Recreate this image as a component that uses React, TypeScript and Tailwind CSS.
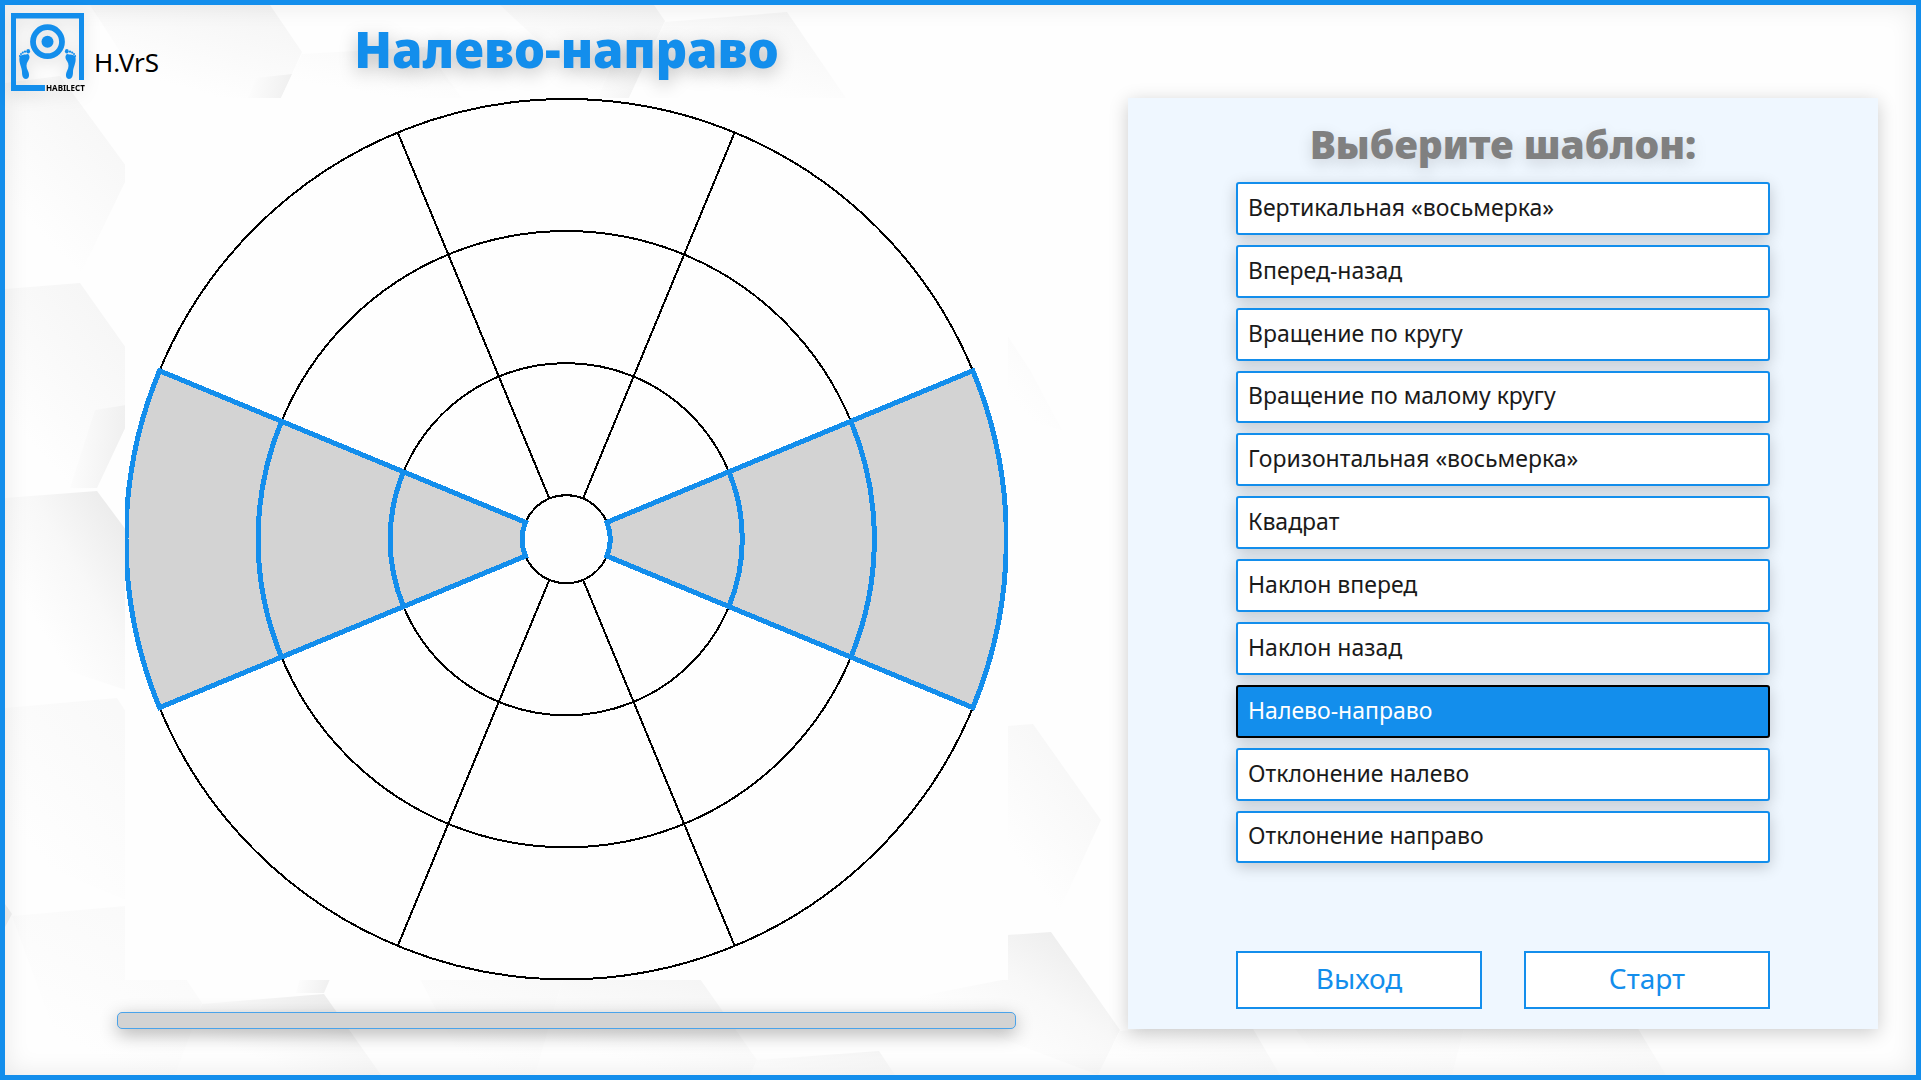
import { useState } from "react";

const templates = [
  "Вертикальная «восьмерка»",
  "Вперед-назад",
  "Вращение по кругу",
  "Вращение по малому кругу",
  "Горизонтальная «восьмерка»",
  "Квадрат",
  "Наклон вперед",
  "Наклон назад",
  "Налево-направо",
  "Отклонение налево",
  "Отклонение направо",
];

function Backdrop() {
  return (
    <svg
      className="absolute inset-0 h-full w-full"
      viewBox="5 5 1911 1070"
      preserveAspectRatio="none"
      aria-hidden="true"
    >
      <defs>
        <linearGradient id="soft" x1="0.8" y1="0" x2="0.3" y2="0.8">
          <stop offset="0" stopColor="#f5f5f5" />
          <stop offset="1" stopColor="#fefefe" />
        </linearGradient>
        <linearGradient id="mid" x1="0.9" y1="0.1" x2="0.3" y2="0.7">
          <stop offset="0" stopColor="#ececec" />
          <stop offset="0.5" stopColor="#f8f8f8" />
          <stop offset="1" stopColor="#fefefe" />
        </linearGradient>
        <linearGradient id="faint" x1="0.8" y1="0" x2="0.3" y2="0.8">
          <stop offset="0" stopColor="#f9f9f9" />
          <stop offset="1" stopColor="#fefefe" />
        </linearGradient>
        <linearGradient id="fold" x1="1" y1="0.5" x2="0" y2="0.4">
          <stop offset="0" stopColor="#efefef" />
          <stop offset="1" stopColor="#fdfdfd" />
        </linearGradient>
      </defs>
      <polygon points="90,5 270,5 302,52 281,98 150,98" fill="url(#soft)" />
      <polygon points="256,78 292,74 281,98 248,98" fill="url(#fold)" />
      <polygon points="302,54 425,47 462,98 281,98" fill="url(#faint)" />
      <polygon points="500,5 654,5 665,21 629,98 600,98" fill="url(#soft)" />
      <polygon points="620,45 655,40 629,98 598,98" fill="url(#fold)" />
      <polygon points="665,22 787,12 846,98 629,98" fill="url(#soft)" />
      <polygon points="5,83 60,76 126,166 126,180 80,275 5,275" fill="url(#soft)" />
      <polygon points="5,289 80,283 126,348 126,426 97,488 5,498" fill="url(#soft)" />
      <polygon points="95,410 126,405 126,426 97,488 70,488" fill="url(#fold)" />
      <polygon points="5,498 97,491 126,530 126,690 5,650" fill="url(#mid)" />
      <polygon points="5,708 117,698 126,712 126,900 5,850" fill="url(#faint)" />
      <polygon points="5,904 12,914 5,927" fill="#f1f1f1" />
      <polygon points="12,916 126,906 186,979 202,1003 175,1075 70,1075" fill="url(#faint)" />
      <polygon points="300,979 330,979 324,993 296,993" fill="url(#fold)" />
      <polygon points="202,1004 324,994 381,1075 175,1075" fill="url(#mid)" />
      <polygon points="420,979 563,979 535,1075 470,1075" fill="url(#faint)" />
      <polygon points="563,979 700,979 757,1060 750,1075 535,1075" fill="url(#soft)" />
      <polygon points="757,1060 879,1051 895,1075 750,1075" fill="url(#soft)" />
      <polygon points="1007,335 1030,370 1062,430 1007,415" fill="url(#faint)" />
      <polygon points="1007,726 1033,724 1101,820 1055,920 1007,890" fill="url(#soft)" />
      <polygon points="1007,935 1051,932 1120,1030 1098,1075 900,1000 1007,979" fill="url(#mid)" />
      <polygon points="1120,1031 1249,1022 1280,1075 1098,1075" fill="url(#soft)" />
      <polygon points="1290,1022 1466,1022 1452,1075 1330,1075" fill="url(#faint)" />
      <polygon points="1466,1022 1634,1022 1666,1075 1452,1075" fill="url(#soft)" />
    </svg>
  );
}

function Foot() {
  return (
    <>
      <path d="M8.500 44 C10 41 14 42 17 41 C19.500 43 18.500 46 17 48 C15 51 15 54 17 58 C19 62 18 66 15 66 C12 66 11 63 11 59 C11 54 7.500 50 8.500 44 Z" />
      <ellipse cx="17.200" cy="38.200" rx="1.900" ry="2.300" />
      <circle cx="14" cy="38.600" r="1.200" />
      <circle cx="11.800" cy="39.600" r="1.100" />
      <circle cx="10" cy="41" r="1" />
      <circle cx="8.800" cy="43" r="0.900" />
    </>
  );
}

function Logo() {
  return (
    <svg
      className="h-[79px] w-[74px] shrink-0 overflow-visible drop-shadow-[0_4px_8px_rgba(0,0,0,0.15)]"
      viewBox="0 0 74 79"
      role="img"
      aria-label="HABILECT"
    >
      <path d="M0 0H73V67H68V5.500H5V72H34V78H0Z" fill="#138eec" />
      <circle cx="36.500" cy="28.700" r="14.500" fill="none" stroke="#138eec" strokeWidth="5.800" />
      <circle cx="36.500" cy="28.700" r="6" fill="#138eec" />
      <g fill="#138eec">
        <Foot />
      </g>
      <g fill="#138eec" transform="matrix(-1 0 0 1 73 0)">
        <Foot />
      </g>
      <text x="35" y="78" className="font-['Noto_Sans',sans-serif] text-[8px] font-bold" fill="#000">
        HABILECT
      </text>
    </svg>
  );
}

const rings = [44, 176, 308, 440];
const COS = Math.cos(Math.PI / 8);
const SIN = Math.sin(Math.PI / 8);

function sector(inner: number, outer: number, side: number) {
  const sweep = side > 0 ? 1 : 0;
  return [
    `M${side * inner * COS} ${-inner * SIN}`,
    `L${side * outer * COS} ${-outer * SIN}`,
    `A${outer} ${outer} 0 0 ${sweep} ${side * outer * COS} ${outer * SIN}`,
    `L${side * inner * COS} ${inner * SIN}`,
    `A${inner} ${inner} 0 0 ${1 - sweep} ${side * inner * COS} ${-inner * SIN}`,
    "Z",
  ].join(" ");
}

function Wheel() {
  return (
    <svg
      className="block aspect-square w-full bg-[#fefefe]"
      viewBox="-441 -441 882 882"
      shapeRendering="crispEdges"
      role="img"
      aria-label="Схема движения"
    >
      <g fill="none" stroke="#000" strokeWidth="2">
        {rings.map((r) => (
          <circle key={r} r={r} />
        ))}
        {[-1, 1].map((sx) =>
          [-1, 1].map((sy) => (
            <line
              key={`${sx}${sy}`}
              x1={sx * 44 * SIN}
              y1={sy * 44 * COS}
              x2={sx * 440 * SIN}
              y2={sy * 440 * COS}
            />
          )),
        )}
      </g>
      <g fill="#d3d3d3" stroke="#138eec" strokeWidth="5">
        {[-1, 1].map((side) =>
          rings.slice(1).map((outer, i) => <path key={`${side}${outer}`} d={sector(rings[i], outer, side)} />),
        )}
      </g>
    </svg>
  );
}

export default function App() {
  const [selected, setSelected] = useState("Налево-направо");
  const action =
    "h-[58px] border-2 border-[#138eec] bg-white pb-1 text-[28px] leading-9 text-[#138eec]";

  return (
    <div className="relative flex min-h-screen flex-col border-[5px] border-[#138eec] bg-[#fefefe] font-['Noto_Sans','Open_Sans',sans-serif]">
      <Backdrop />
      <div className="absolute inset-0 shadow-[inset_0_0_26px_rgba(0,0,0,0.09)]" />

      <header className="relative grid h-[93px] grid-cols-[1123fr_788fr]">
        <div className="grid grid-cols-[1fr_auto_1fr] items-start px-[6px] pt-2">
          <div className="flex items-start gap-[9px]">
            <Logo />
            <span className="pt-[31px] text-[26px] leading-9 text-black">H.VrS</span>
          </div>
          <h1 className="pt-[6px] text-[49px] leading-[60px] font-black text-[#138eec] [text-shadow:0_5px_18px_rgba(0,0,0,0.25)]">
            {selected}
          </h1>
        </div>
      </header>

      <main className="relative grid grid-cols-[1123fr_788fr] pb-10">
        <section className="mx-auto w-4/5">
          <div className="px-2">
            <Wheel />
          </div>
          <div
            role="progressbar"
            aria-label="Прогресс"
            aria-valuenow={0}
            className="mt-8 h-[17px] rounded-[5px] border border-[#4aa3ea] bg-[#d3d3d3] shadow-[0_5px_18px_rgba(0,0,0,0.3)]"
          />
        </section>

        <section className="mr-[38px] flex flex-col bg-[#eff7ff] px-[108px] pt-[21px] pb-5 shadow-[0_4px_18px_rgba(0,0,0,0.2)]">
          <h2 className="mb-[13px] text-center text-[39px] leading-[50px] font-black text-[#808080] [text-shadow:0_5px_15px_rgba(0,0,0,0.15)]">
            Выберите шаблон:
          </h2>
          <ul className="grid flex-1 auto-rows-fr gap-[10px]">
            {templates.map((name) => (
              <li key={name} className="flex">
                <button
                  type="button"
                  aria-pressed={name === selected}
                  onClick={() => setSelected(name)}
                  className={
                    "w-full rounded-[3px] border-2 px-[10px] pb-[3px] text-left text-[23px] leading-8 shadow-[0_4px_15px_rgba(0,0,0,0.2)] " +
                    (name === selected
                      ? "border-black bg-[#138eec] text-white"
                      : "border-[#138eec] bg-white text-[#1a1a1a]")
                  }
                >
                  {name}
                </button>
              </li>
            ))}
          </ul>
          <div className="mt-[88px] grid grid-cols-2 gap-[42px]">
            <button type="button" className={action}>
              Выход
            </button>
            <button type="button" className={action}>
              Старт
            </button>
          </div>
        </section>
      </main>
    </div>
  );
}
